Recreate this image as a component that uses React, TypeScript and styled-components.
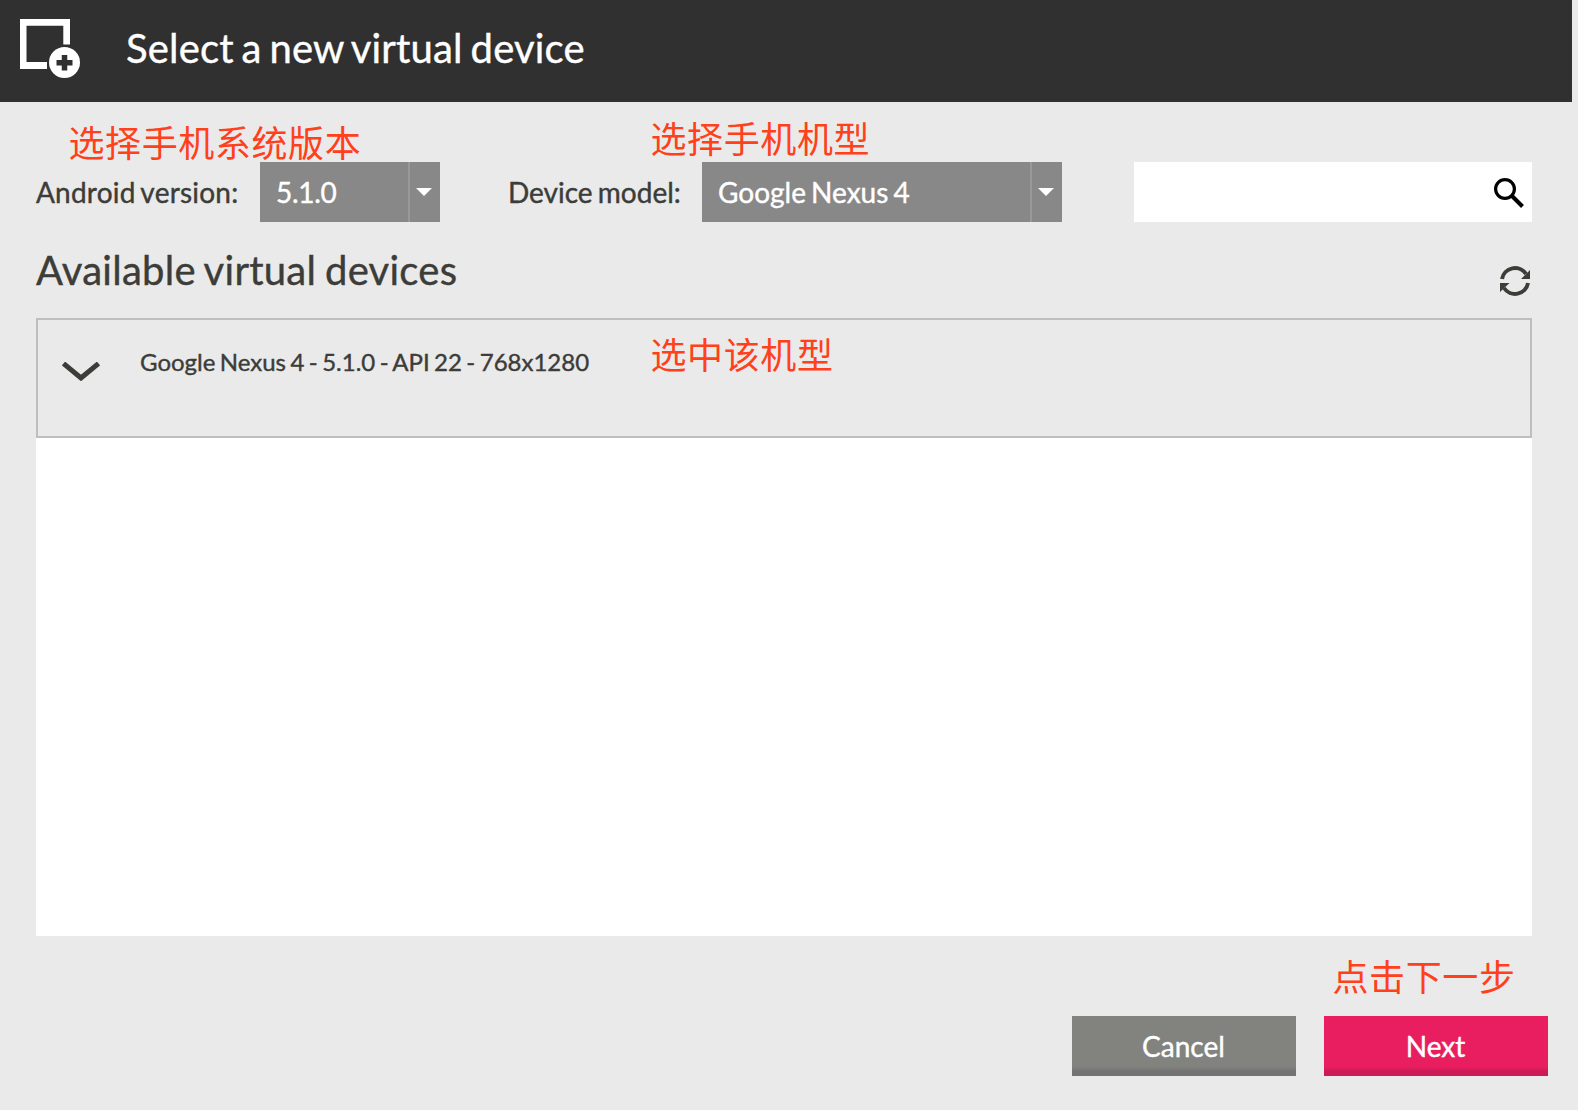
import React from 'react';
import styled, { createGlobalStyle } from 'styled-components';

const GlobalStyle = createGlobalStyle`
  html, body { margin: 0; padding: 0; }
  body { background: #eaeaea; font-family: Lato, "Noto Sans CJK SC", sans-serif; color: #3c3c38; }
  * { box-sizing: border-box; }
`;

const Window = styled.div`
  position: relative;
  display: flex;
  flex-direction: column;
  width: 1578px;
  height: 1110px;
  overflow: hidden;
  background: #eaeaea;
  -webkit-text-stroke: 0.4px currentColor;
`;

const Header = styled.header`
  display: flex;
  align-items: center;
  width: 1572px;
  height: 102px;
  padding: 0 0 4px 20px;
  gap: 46px;
  background: #303030;
`;

const Title = styled.h1`
  margin: 0 0 2px;
  font-size: 40px;
  font-weight: 400;
  line-height: 48px;
  letter-spacing: 0.18px;
  word-spacing: -2.6px;
  white-space: nowrap;
  color: #fff;
`;

const Content = styled.main`
  display: flex;
  flex-direction: column;
  width: 1532px;
  padding: 60px 0 0 36px;
`;

const Filters = styled.div`
  display: flex;
  align-items: center;
  height: 60px;
`;

const Label = styled.label<{ $width: number; $tracking?: number }>`
  flex: none;
  width: ${p => p.$width}px;
  font-size: 28px;
  line-height: 34px;
  letter-spacing: ${p => p.$tracking ?? 0}px;
  word-spacing: -2px;
  white-space: nowrap;
`;

const Select = styled.button<{ $width: number; $after: number; $tracking: number }>`
  display: flex;
  flex: none;
  width: ${p => p.$width}px;
  height: 60px;
  margin: 0 ${p => p.$after}px 0 0;
  padding: 0;
  border: 0;
  background: #888;
  color: #fff;
  font: inherit;
  font-size: 28px;
  line-height: 60px;
  letter-spacing: ${p => p.$tracking}px;
  word-spacing: -2px;
  text-align: left;
`;

const SelectValue = styled.span`
  flex: 1;
  padding-left: 16px;
`;

const SelectArrow = styled.span`
  display: flex;
  align-items: center;
  width: 32px;
  height: 60px;
  padding-left: 6px;
  border-left: 2px solid #999;
`;

const SearchBox = styled.div`
  display: flex;
  align-items: center;
  justify-content: flex-end;
  width: 398px;
  height: 60px;
  padding: 2px 8px 0 0;
  background: #fff;
`;

const SectionHead = styled.div`
  display: flex;
  justify-content: space-between;
  align-items: flex-start;
  height: 96px;
  padding: 24px 2px 0 0;
`;

const SectionTitle = styled.h2`
  margin: 0;
  font-size: 40px;
  font-weight: 400;
  line-height: 48px;
  letter-spacing: 0.26px;
  word-spacing: -1.7px;
  white-space: nowrap;
`;

const RefreshButton = styled.button`
  display: flex;
  margin: 20px 0 0;
  padding: 0;
  border: 0;
  background: none;
`;

const DeviceList = styled.div`
  height: 618px;
  background: #fff;
`;

const DeviceRow = styled.div`
  display: flex;
  align-items: flex-start;
  height: 120px;
  padding: 27px 0 0 24px;
  gap: 40px;
  border: 2px solid #bebebe;
  background: #eaeaea;
  font-size: 24px;
  line-height: 30px;
  word-spacing: -1.7px;
`;

const Chevron = styled.svg`
  flex: none;
  margin-top: 15px;
`;

const Footer = styled.footer`
  display: flex;
  justify-content: flex-end;
  gap: 28px;
  padding: 80px 30px 0 0;
`;

const Button = styled.button<{ $primary?: boolean }>`
  width: 224px;
  height: 60px;
  padding: 0 1px 0 0;
  border: 0;
  color: #fff;
  font: inherit;
  font-size: 28px;
  line-height: 60px;
  background: ${p => (p.$primary
    ? 'linear-gradient(#e91e60 51px, #cc1a55 55px)'
    : 'linear-gradient(#82827f 51px, #737373 55px)')};
`;

const Note = styled.span<{ $x: number; $y: number }>`
  position: absolute;
  left: ${p => p.$x}px;
  top: ${p => p.$y}px;
  font-family: "Noto Sans CJK SC", sans-serif;
  font-size: 36px;
  font-weight: 400;
  line-height: 40px;
  letter-spacing: 0.6px;
  white-space: nowrap;
  color: #ff401a;
  -webkit-text-stroke: 0;
`;

interface DropdownProps {
  value: string;
  width: number;
  after: number;
  tracking?: number;
}

const Dropdown = ({ value, width, after, tracking = 0 }: DropdownProps) => (
  <Select $width={width} $after={after} $tracking={tracking}>
    <SelectValue>{value}</SelectValue>
    <SelectArrow>
      <svg width="16" height="8" viewBox="0 0 16 8"><path d="M0 0h16L8 8z" fill="#fff" /></svg>
    </SelectArrow>
  </Select>
);

export default function App() {
  return (
    <Window>
      <GlobalStyle />
      <Header>
        <svg width="60" height="60" viewBox="0 0 60 60">
          <path d="M0 0H50V25.500H43.300V6.700H6.500V43H27V50H0Z" fill="#fff" />
          <circle cx="44.500" cy="43.500" r="15.500" fill="#fff" />
          <path d="M44.500 36v15.500M36.500 43.800h16" stroke="#303030" strokeWidth="5.500" />
        </svg>
        <Title>Select a new virtual device</Title>
      </Header>
      <Content>
        <Filters>
          <Label $width={224} $tracking={0.22}>Android version:</Label>
          <Dropdown value="5.1.0" width={180} after={68} tracking={-0.3} />
          <Label $width={194}>Device model:</Label>
          <Dropdown value="Google Nexus 4" width={360} after={72} />
          <SearchBox>
            <svg width="30" height="30" viewBox="0 0 30 30" fill="none" stroke="#000">
              <circle cx="11" cy="11" r="9.400" strokeWidth="3.200" />
              <path d="M18 18L28.500 28.500" strokeWidth="4" />
            </svg>
          </SearchBox>
        </Filters>
        <SectionHead>
          <SectionTitle>Available virtual devices</SectionTitle>
          <RefreshButton aria-label="Refresh">
            <svg width="30" height="30" viewBox="0 0 30 30">
              <path d="M2 13A13.200 13.200 0 0 1 26 8M28 17A13.200 13.200 0 0 1 4 22" fill="none" stroke="#3c3c38" strokeWidth="4" />
              <path d="M30 4V13H21ZM0 26V17H9.500Z" fill="#3c3c38" />
            </svg>
          </RefreshButton>
        </SectionHead>
        <DeviceList>
          <DeviceRow>
            <Chevron width="38" height="19" viewBox="0 0 38 19">
              <path d="M1.500 1.500L19 16L36.500 1.500" fill="none" stroke="#3c3c38" strokeWidth="5" />
            </Chevron>
            <span>Google Nexus 4 - 5.1.0 - API 22 - 768x1280</span>
          </DeviceRow>
        </DeviceList>
      </Content>
      <Footer>
        <Button>Cancel</Button>
        <Button $primary>Next</Button>
      </Footer>
      <Note $x={68.5} $y={121}>选择手机系统版本</Note>
      <Note $x={650.5} $y={117}>选择手机机型</Note>
      <Note $x={650.5} $y={333}>选中该机型</Note>
      <Note $x={1332.5} $y={955}>点击下一步</Note>
    </Window>
  );
}
